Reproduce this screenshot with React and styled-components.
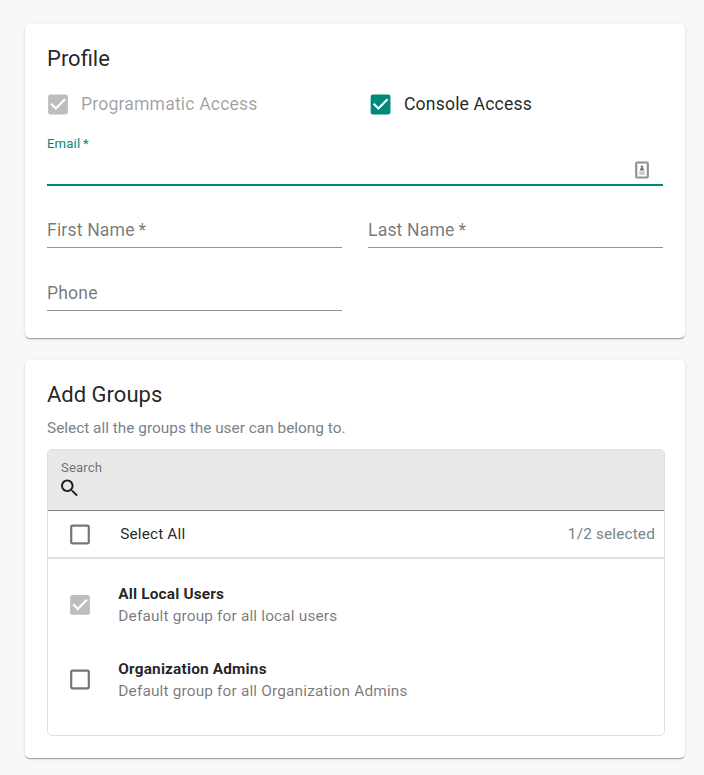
import React from "react";
import styled, { createGlobalStyle } from "styled-components";

const GlobalStyle = createGlobalStyle`
  *, *::before, *::after { box-sizing: border-box; }
  body {
    margin: 0;
    background: #f7f8fa;
    color: rgba(0, 0, 0, 0.87);
    font-family: Roboto, "Liberation Sans", sans-serif;
    -webkit-font-smoothing: antialiased;
  }
`;

const Page = styled.main`
  display: flex;
  flex-direction: column;
  gap: 22px;
  width: 704px;
  height: 775px;
  padding: 24px 19px 0 25px;
`;

const Card = styled.section`
  height: ${(p) => p.$height}px;
  padding: 22px 22px 0;
  background: #fff;
  border-radius: 5px;
  box-shadow: 0 2px 1px -1px rgba(0, 0, 0, 0.2), 0 1px 1px 0 rgba(0, 0, 0, 0.14),
    0 1px 3px 0 rgba(0, 0, 0, 0.12);
`;

const Title = styled.h2`
  margin: 0;
  font-size: 22px;
  font-weight: 400;
  line-height: 26px;
  color: rgba(0, 0, 0, 0.87);
`;

const AccessRow = styled.div`
  display: grid;
  grid-template-columns: 323px 1fr;
  height: 27px;
  margin: 19px 0 0 -3px;
`;

const AccessOption = styled.label`
  display: flex;
  align-items: center;
  gap: 9px;
  height: 27px;
  font-size: 17.6px;
  letter-spacing: 0.165px;
  color: ${(p) => (p.$disabled ? "rgba(0, 0, 0, 0.38)" : "rgba(0, 0, 0, 0.87)")};
`;

const AccessText = styled.span`
  line-height: 27px;
`;

const BoxIcon = styled.svg`
  display: block;
  flex: none;
  width: 28px;
  height: 27px;
  fill: ${(p) => p.$color};
`;

const Field = styled.div`
  display: flex;
  flex-direction: column;
  justify-content: flex-end;
  height: 63px;
  border-bottom: 1px solid rgba(0, 0, 0, 0.42);
`;

const FieldLabel = styled.label`
  padding-bottom: 6px;
  font-size: 17.6px;
  line-height: 22px;
  letter-spacing: 0.165px;
  color: rgba(0, 0, 0, 0.54);
`;

const EmailField = styled.div`
  display: flex;
  flex-direction: column;
  height: 53px;
  margin-top: 15px;
  padding-top: 1px;
  border-bottom: 2px solid #00897b;
`;

const EmailLabel = styled.label`
  font-size: 13.2px;
  line-height: 20px;
  letter-spacing: 0.124px;
  color: #00897b;
`;

const EmailEntry = styled.div`
  display: flex;
  justify-content: flex-end;
  padding: 7px 14px 0 0;
`;

const FieldGrid = styled.div`
  display: grid;
  grid-template-columns: 295px 295px;
  column-gap: 26px;
  margin-top: -1px;
`;

const Hint = styled.p`
  margin: 9px 0 0;
  font-size: 15.4px;
  line-height: 22px;
  color: #77838b;
`;

const Picker = styled.div`
  width: 618px;
  height: 287px;
  margin-top: 10px;
  overflow: hidden;
  border: 1px solid #dedede;
  border-radius: 5px;
`;

const SearchBar = styled.div`
  display: flex;
  flex-direction: column;
  height: 61px;
  padding: 8px 11px 0 13px;
  background: #e8e8e8;
  border-bottom: 1px solid #848484;
`;

const SearchLabel = styled.label`
  font-size: 13.2px;
  line-height: 20px;
  letter-spacing: 0.124px;
  color: rgba(0, 0, 0, 0.54);
`;

const SearchGlyph = styled.svg`
  display: block;
  width: 23px;
  height: 23px;
  margin: -1px 0 0 -3px;
  fill: rgba(0, 0, 0, 0.87);
`;

const SelectAllRow = styled.div`
  display: flex;
  align-items: center;
  height: 48px;
  padding: 0 9px 0 18px;
  border-bottom: 2px solid #e0e0e0;
  font-size: 15.4px;
  line-height: 22px;
`;

const SelectAllText = styled.span`
  flex: 1;
  margin-left: 26.2px;
  letter-spacing: 0.144px;
`;

const Count = styled.span`
  letter-spacing: 0.144px;
  color: #77838b;
`;

const GroupList = styled.ul`
  margin: 0;
  padding: 8px 0 0;
  list-style: none;
`;

const GroupRow = styled.li`
  display: flex;
  align-items: center;
  height: 75px;
  padding-left: 18px;
`;

const GroupText = styled.div`
  display: flex;
  flex-direction: column;
  margin-left: 24.3px;
  font-size: 15.4px;
  line-height: 22px;
`;

const GroupName = styled.span`
  font-weight: 700;
  letter-spacing: 0.165px;
`;

const GroupDescription = styled.span`
  letter-spacing: 0.165px;
  color: rgba(0, 0, 0, 0.54);
`;

const CHECKED =
  "M19 3H5c-1.11 0-2 .9-2 2v14c0 1.1.89 2 2 2h14c1.11 0 2-.9 2-2V5c0-1.1-.89-2-2-2zm-9 14l-5-5 1.41-1.41L10 14.17l7.59-7.59L19 8l-9 9z";
const UNCHECKED =
  "M19 5v14H5V5h14m0-2H5c-1.1 0-2 .9-2 2v14c0 1.1.9 2 2 2h14c1.1 0 2-.9 2-2V5c0-1.1-.9-2-2-2z";

function Checkbox({ checked, disabled, dx = 0, dy = 0 }) {
  const color = disabled ? "#bdbdbd" : checked ? "#00897b" : "#757575";
  return (
    <BoxIcon viewBox="-0.727 -0.273 25.455 24.545" $color={color} aria-hidden="true">
      <path transform={`translate(${dx} ${dy})`} d={checked ? CHECKED : UNCHECKED} />
    </BoxIcon>
  );
}

function ContactIcon() {
  return (
    <svg width="14" height="18" viewBox="0 0 14 18" aria-hidden="true">
      <rect x="1.2" y="1.5" width="11.6" height="15" rx="1" fill="#fff" stroke="#929292" strokeWidth="2.2" />
      <circle cx="7" cy="5.7" r="1.3" fill="#777" />
      <path d="M4.8 9.5c0-1.8.9-2.8 2.2-2.8s2.2 1 2.2 2.8z" fill="#777" />
      <path d="M4.2 11h5.6M4.2 12.8h5.6" stroke="#aaa" strokeWidth="1.2" />
    </svg>
  );
}

const groups = [
  { name: "All Local Users", description: "Default group for all local users", checked: true, disabled: true, dy: 0.4 },
  { name: "Organization Admins", description: "Default group for all Organization Admins" },
];

export default function App() {
  return (
    <>
      <GlobalStyle />
      <Page>
        <Card $height={314}>
          <Title>Profile</Title>
          <AccessRow>
            <AccessOption $disabled>
              <Checkbox checked disabled />
              <AccessText>Programmatic Access</AccessText>
            </AccessOption>
            <AccessOption>
              <Checkbox checked dx={-0.4} />
              <AccessText>Console Access</AccessText>
            </AccessOption>
          </AccessRow>
          <EmailField>
            <EmailLabel>Email{"\u2009"}*</EmailLabel>
            <EmailEntry>
              <ContactIcon />
            </EmailEntry>
          </EmailField>
          <FieldGrid>
            <Field>
              <FieldLabel>First Name{"\u2009"}*</FieldLabel>
            </Field>
            <Field>
              <FieldLabel>Last Name{"\u2009"}*</FieldLabel>
            </Field>
            <Field>
              <FieldLabel>Phone</FieldLabel>
            </Field>
          </FieldGrid>
        </Card>
        <Card $height={398}>
          <Title>Add Groups</Title>
          <Hint>Select all the groups the user can belong to.</Hint>
          <Picker>
            <SearchBar>
              <SearchLabel>Search</SearchLabel>
              <SearchGlyph viewBox="-0.2 0.3 24 24" aria-hidden="true">
                <path d="M15.5 14h-.79l-.28-.27C15.41 12.59 16 11.11 16 9.5 16 5.91 13.09 3 9.5 3S3 5.91 3 9.5 5.91 16 9.5 16c1.61 0 3.09-.59 4.23-1.57l.27.28v.79l5 4.99L20.49 19l-4.99-5zm-6 0C7.01 14 5 11.99 5 9.5S7.01 5 9.5 5 14 7.01 14 9.5 11.99 14 9.5 14z" />
              </SearchGlyph>
            </SearchBar>
            <SelectAllRow>
              <Checkbox />
              <SelectAllText>Select All</SelectAllText>
              <Count>1/2 selected</Count>
            </SelectAllRow>
            <GroupList>
              {groups.map((g) => (
                <GroupRow key={g.name}>
                  <Checkbox checked={g.checked} disabled={g.disabled} dy={g.dy} />
                  <GroupText>
                    <GroupName>{g.name}</GroupName>
                    <GroupDescription>{g.description}</GroupDescription>
                  </GroupText>
                </GroupRow>
              ))}
            </GroupList>
          </Picker>
        </Card>
      </Page>
    </>
  );
}
